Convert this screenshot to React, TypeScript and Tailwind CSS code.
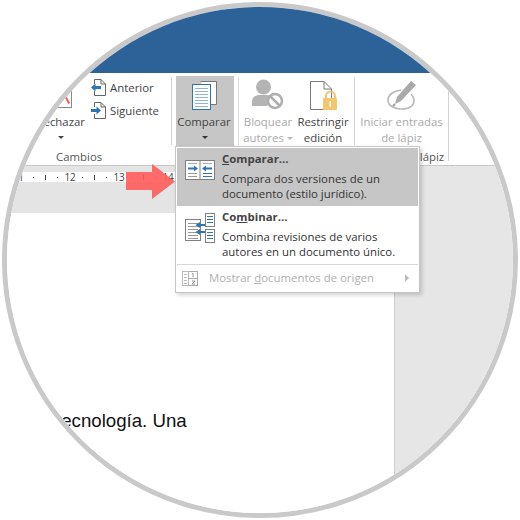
const font = "font-['Open_Sans','Noto_Sans',sans-serif]";

function DocLines({ x, y, w, n, gap = 3, stroke = "#8fb4d9" }: { x: number; y: number; w: number; n: number; gap?: number; stroke?: string }) {
  return (
    <g stroke={stroke} strokeWidth="1">
      {Array.from({ length: n }).map((_, i) => (
        <line key={i} x1={x} x2={x + w} y1={y + i * gap + 0.5} y2={y + i * gap + 0.5} />
      ))}
    </g>
  );
}

function CompareIcon() {
  return (
    <svg width="26" height="29" viewBox="0 0 26 29" fill="none">
      <path d="M8.5 .5H24.5V23.5H19" stroke="#777" fill="#fff" />
      <rect x=".5" y="3.5" width="18" height="25" fill="#fff" stroke="#2e75b6" />
      <DocLines x={3} y={7} w={13} n={7} />
    </svg>
  );
}

function BlockIcon() {
  return (
    <svg width="32" height="32" viewBox="0 0 32 32">
      <circle cx="11.5" cy="9" r="7.5" fill="#b4b4b4" />
      <path d="M0 28v-5c0-4 4-6 8-6h7c3 0 5 1 6 3l-6 8z" fill="#b4b4b4" />
      <circle cx="23" cy="23" r="7" fill="#fff" stroke="#adadad" strokeWidth="2.5" />
      <line x1="18.5" y1="18.5" x2="27.5" y2="27.5" stroke="#adadad" strokeWidth="2.5" />
    </svg>
  );
}

function LockDocIcon() {
  return (
    <svg width="28" height="29" viewBox="0 0 28 29" fill="none">
      <path d="M.5 .5H14L21.5 8V28.5H.5z" stroke="#7a7a7a" fill="#fff" />
      <path d="M14 .5V8H21.5" stroke="#7a7a7a" />
      <path d="M16 18v-3a4.5 4.5 0 0 1 9 0v3" stroke="#f0c675" strokeWidth="2" />
      <rect x="13" y="17" width="14" height="12" rx="1" fill="#f2c76e" />
      <rect x="19.5" y="20" width="1.5" height="6" fill="#fff" />
    </svg>
  );
}

function InkIcon() {
  return (
    <svg width="30" height="30" viewBox="0 0 30 30" fill="none">
      <path d="M14 10C6 11 1 15 1 20c0 6 7 9 13 9 8 0 13-3 13-9 0-2-1-4-3-6" stroke="#b9b9b9" strokeWidth="1.6" />
      <path d="M24 1l5 4-15 16-6 3 2-7z" fill="#a9a9a9" />
      <path d="M6 26l2-2" stroke="#999" strokeWidth="2" />
    </svg>
  );
}

function ArrowDoc({ dir }: { dir: "left" | "right" }) {
  return (
    <svg width="15" height="17" viewBox="0 0 15 17" fill="none">
      <path d="M3.5 5V.5H10L14.5 5V16.5H3.5V12" stroke="#666" fill="#fff" />
      <path d="M10 .5V5H14.5" stroke="#666" />
      {dir === "left" ? (
        <path d="M0 8.5L4.5 4.5V7H10V10H4.5V12.5z" fill="#2e75b6" />
      ) : (
        <path d="M10 8.5L5.5 4.5V7H0V10H5.5V12.5z" fill="#2e75b6" />
      )}
    </svg>
  );
}

function CompareMenuIcon() {
  return (
    <svg width="30" height="20" viewBox="0 0 30 20" fill="none">
      <rect x=".5" y=".5" width="29" height="19" fill="#fff" stroke="#808080" />
      <line x1="15" y1="0" x2="15" y2="20" stroke="#808080" />
      <DocLines x={3} y={3} w={9} n={1} stroke="#aaa" />
      <DocLines x={18} y={3} w={9} n={1} stroke="#aaa" />
      <path d="M3 7.500H9V5.500L13 8.500 9 11.500V9.500H3z" fill="#2e75b6" />
      <path d="M27 7.500H21V5.500L17 8.500 21 11.500V9.500H27z" fill="#2e75b6" />
      <DocLines x={3} y={13} w={9} n={2} stroke="#999" />
      <DocLines x={18} y={13} w={9} n={2} stroke="#2e75b6" />
    </svg>
  );
}

function CombineMenuIcon() {
  return (
    <svg width="30" height="30" viewBox="0 0 30 30" fill="none">
      <rect x=".5" y="6.500" width="15" height="21" fill="#fff" stroke="#808080" />
      <DocLines x={3} y={10} w={10} n={6} stroke="#999" />
      <rect x="20.500" y=".5" width="9" height="13" fill="#fff" stroke="#808080" />
      <DocLines x={22} y={3} w={6} n={3} stroke="#2e75b6" />
      <rect x="20.500" y="16.500" width="9" height="13" fill="#fff" stroke="#808080" />
      <DocLines x={22} y={19} w={6} n={3} stroke="#2e75b6" />
      <path d="M20 11H15V9L10.500 12 15 15V13H20z" fill="#2e75b6" />
      <path d="M20 18H15V16L10.500 19 15 22V20H20z" fill="#2e75b6" />
    </svg>
  );
}

function SourceMenuIcon() {
  return (
    <svg width="16" height="15" viewBox="0 0 16 15" fill="none">
      <rect x="6.500" y=".5" width="9" height="14" stroke="#aaa" />
      <rect x=".5" y=".5" width="6" height="14" stroke="#bbb" />
      <line x1="6.500" y1="7.500" x2="15.500" y2="7.500" stroke="#aaa" />
      <DocLines x={2} y={3} w={3} n={4} stroke="#bbb" />
      <path d="M10 3l1-1v4M10 10h3l-3 3h3" stroke="#999" />
    </svg>
  );
}

function Ruler() {
  const marks = ["1", ".", "|", ".", "12", ".", "|", ".", "13", ".", "|", ".", "14", ".", "|", "."];
  return (
    <div className="ml-[8px] flex h-[10px] items-center">
      {marks.map((m, i) => (
        <div key={i} className="flex w-[12.25px] shrink-0 items-center justify-center">
          {m === "." && <span className="h-px w-px bg-[#444]" />}
          {m === "|" && <span className="h-[5px] w-px bg-[#444]" />}
          {m !== "." && m !== "|" && <span className="text-[10px] leading-none text-[#444]">{m}</span>}
        </div>
      ))}
    </div>
  );
}

function Caret({ color = "border-t-[#444]" }: { color?: string }) {
  return <span className={`inline-block h-0 w-0 border-x-[3px] border-t-[3px] border-x-transparent ${color}`} />;
}

function MenuItem({ icon, iconTop, title, lines, active }: { icon: React.ReactNode; iconTop: string; title: React.ReactNode; lines: string[]; active?: boolean }) {
  return (
    <div className={`flex h-[58px] ${active ? "bg-[#c6c6c6]" : ""}`}>
      <div className={`flex w-[45px] shrink-0 justify-center ${iconTop}`}>{icon}</div>
      <div className="pt-[3px] text-[11.400px] leading-[15px] text-[#444]">
        <div className="mb-[5px] font-bold">{title}</div>
        {lines.map((l) => (
          <div key={l} className="text-[#333]">{l}</div>
        ))}
      </div>
    </div>
  );
}

export default function App() {
  return (
    <div className="relative h-[520px] w-[520px] overflow-hidden bg-white">
      {/* Lens */}
      <div className="m-[2px] flex h-[516px] w-[516px] flex-col overflow-hidden rounded-full border-[5px] border-[#c9c9c9] bg-white">
        <div className="h-[66px] shrink-0 bg-[#2d6299]" />

        {/* Ribbon */}
        <div className={`flex h-[93px] shrink-0 border-b border-[#c8c8c8] bg-white text-[11.400px] leading-[16px] text-[#444] ${font}`}>
          <div className="relative w-[164px] shrink-0 pt-[3px]">
            <div className="flex">
              <div className="flex w-[78px] flex-col items-end">
                <div className="relative mr-[13px] h-[32px] w-[22px] border-r border-b border-[#888]">
                  <span className="absolute right-[3px] bottom-[3px] h-[9px] w-[2px] -rotate-30 bg-[#e8654a]" />
                </div>
                <div className="mt-[6px]">echazar</div>
                <div className="mt-[2px] mr-[21px] flex h-[10px] items-center"><Caret /></div>
              </div>
              <div className="ml-[6px] flex flex-col gap-[6px] pt-[3px] leading-[17px]">
                <div className="flex items-center gap-[4px]"><ArrowDoc dir="left" /> Anterior</div>
                <div className="flex items-center gap-[4px]"><ArrowDoc dir="right" /> Siguiente</div>
              </div>
            </div>
            <div className="absolute top-[76px] left-[49px] text-[#555]">Cambios</div>
          </div>
          <div className="mt-[4px] mb-[20px] w-px bg-[#d4d4d4]" />

          <div className="mt-[3px] ml-[4px] flex h-[87px] w-[58px] shrink-0 flex-col items-center bg-[#c6c6c6] pt-[5px]">
            <CompareIcon />
            <div className="mt-[4px] -translate-x-px">Comparar</div>
            <div className="mt-[2px] flex h-[10px] items-center"><Caret color="border-t-[#333]" /></div>
          </div>
          <div className="mt-[4px] mb-[20px] ml-[4px] w-px bg-[#d4d4d4]" />

          <div className="ml-[1px] flex w-[56px] shrink-0 flex-col items-center pt-[5px] text-[#aaa]">
            <BlockIcon />
            <div className="mt-[4px]">Bloquear</div>
            <div className="flex items-center gap-[3px]">autores <Caret color="border-t-[#bbb]" /></div>
          </div>
          <div className="flex w-[54px] shrink-0 flex-col items-center pt-[8px]">
            <div className="pl-[2px]"><LockDocIcon /></div>
            <div className="mt-[4px]">Restringir</div>
            <div>edición</div>
          </div>
          <div className="mt-[4px] mb-[20px] ml-[4px] w-px bg-[#d4d4d4]" />

          <div className="flex w-[93px] shrink-0 flex-col items-center pt-[7px] text-[#aaa]">
            <InkIcon />
            <div className="mt-[4px]">Iniciar entradas</div>
            <div>de lápiz</div>
            <div className="mt-[3px] text-[#555]">Entrada de lápiz</div>
          </div>
          <div className="mt-[17px] mb-[4px] w-px bg-[#d4d4d4]" />
        </div>

        {/* Document area */}
        <div className="flex min-h-0 flex-1">
          <div className="flex w-[387px] shrink-0 flex-col">
            <div className="h-[47px] shrink-0 bg-[#e4e4e4] pt-[6px]">
              <div className={`bg-white ${font}`}><Ruler /></div>
            </div>
            <div className="flex-1 bg-white pt-[197px] pl-[49px] font-['Liberation_Sans',sans-serif] text-[18.670px] leading-[22px] text-[#111]">
              tecnología. Una
            </div>
          </div>
          <div className="flex-1 border-l border-[#cfcfcf] bg-[#e6e6e6]" />
        </div>
      </div>

      {/* Callout arrow */}
      <svg className="absolute top-[164px] left-[126px] opacity-90" width="50" height="35" viewBox="0 0 50 35">
        <path d="M0 8H26V0L49 17.500 26 35V26H0z" fill="#ff5c5c" />
      </svg>

      {/* Compare dropdown */}
      <div className={`absolute top-[146px] left-[175px] w-[245px] border border-[#c6c6c6] bg-white p-px shadow-[2px_2px_4px_rgba(0,0,0,0.18)] ${font}`}>
        <MenuItem
          active
          iconTop="pt-[12px]"
          icon={<CompareMenuIcon />}
          title={<><span className="underline">C</span>omparar...</>}
          lines={["Compara dos versiones de un", "documento (estilo jurídico)."]}
        />
        <MenuItem
          iconTop="pt-[7px]"
          icon={<CombineMenuIcon />}
          title={<>Co<span className="underline">m</span>binar...</>}
          lines={["Combina revisiones de varios", "autores en un documento único."]}
        />
        <div className="flex h-[27px] items-center border-t border-[#d8d8d8] text-[11.400px] text-[#b0b0b0]">
          <div className="mr-[6px] flex w-[26px] justify-center"><SourceMenuIcon /></div>
          <div>Mostrar <span className="underline">d</span>ocumentos de origen</div>
          <span className="mr-[9px] ml-auto h-0 w-0 border-y-[4px] border-l-[4px] border-y-transparent border-l-[#bbb]" />
        </div>
      </div>
    </div>
  );
}
